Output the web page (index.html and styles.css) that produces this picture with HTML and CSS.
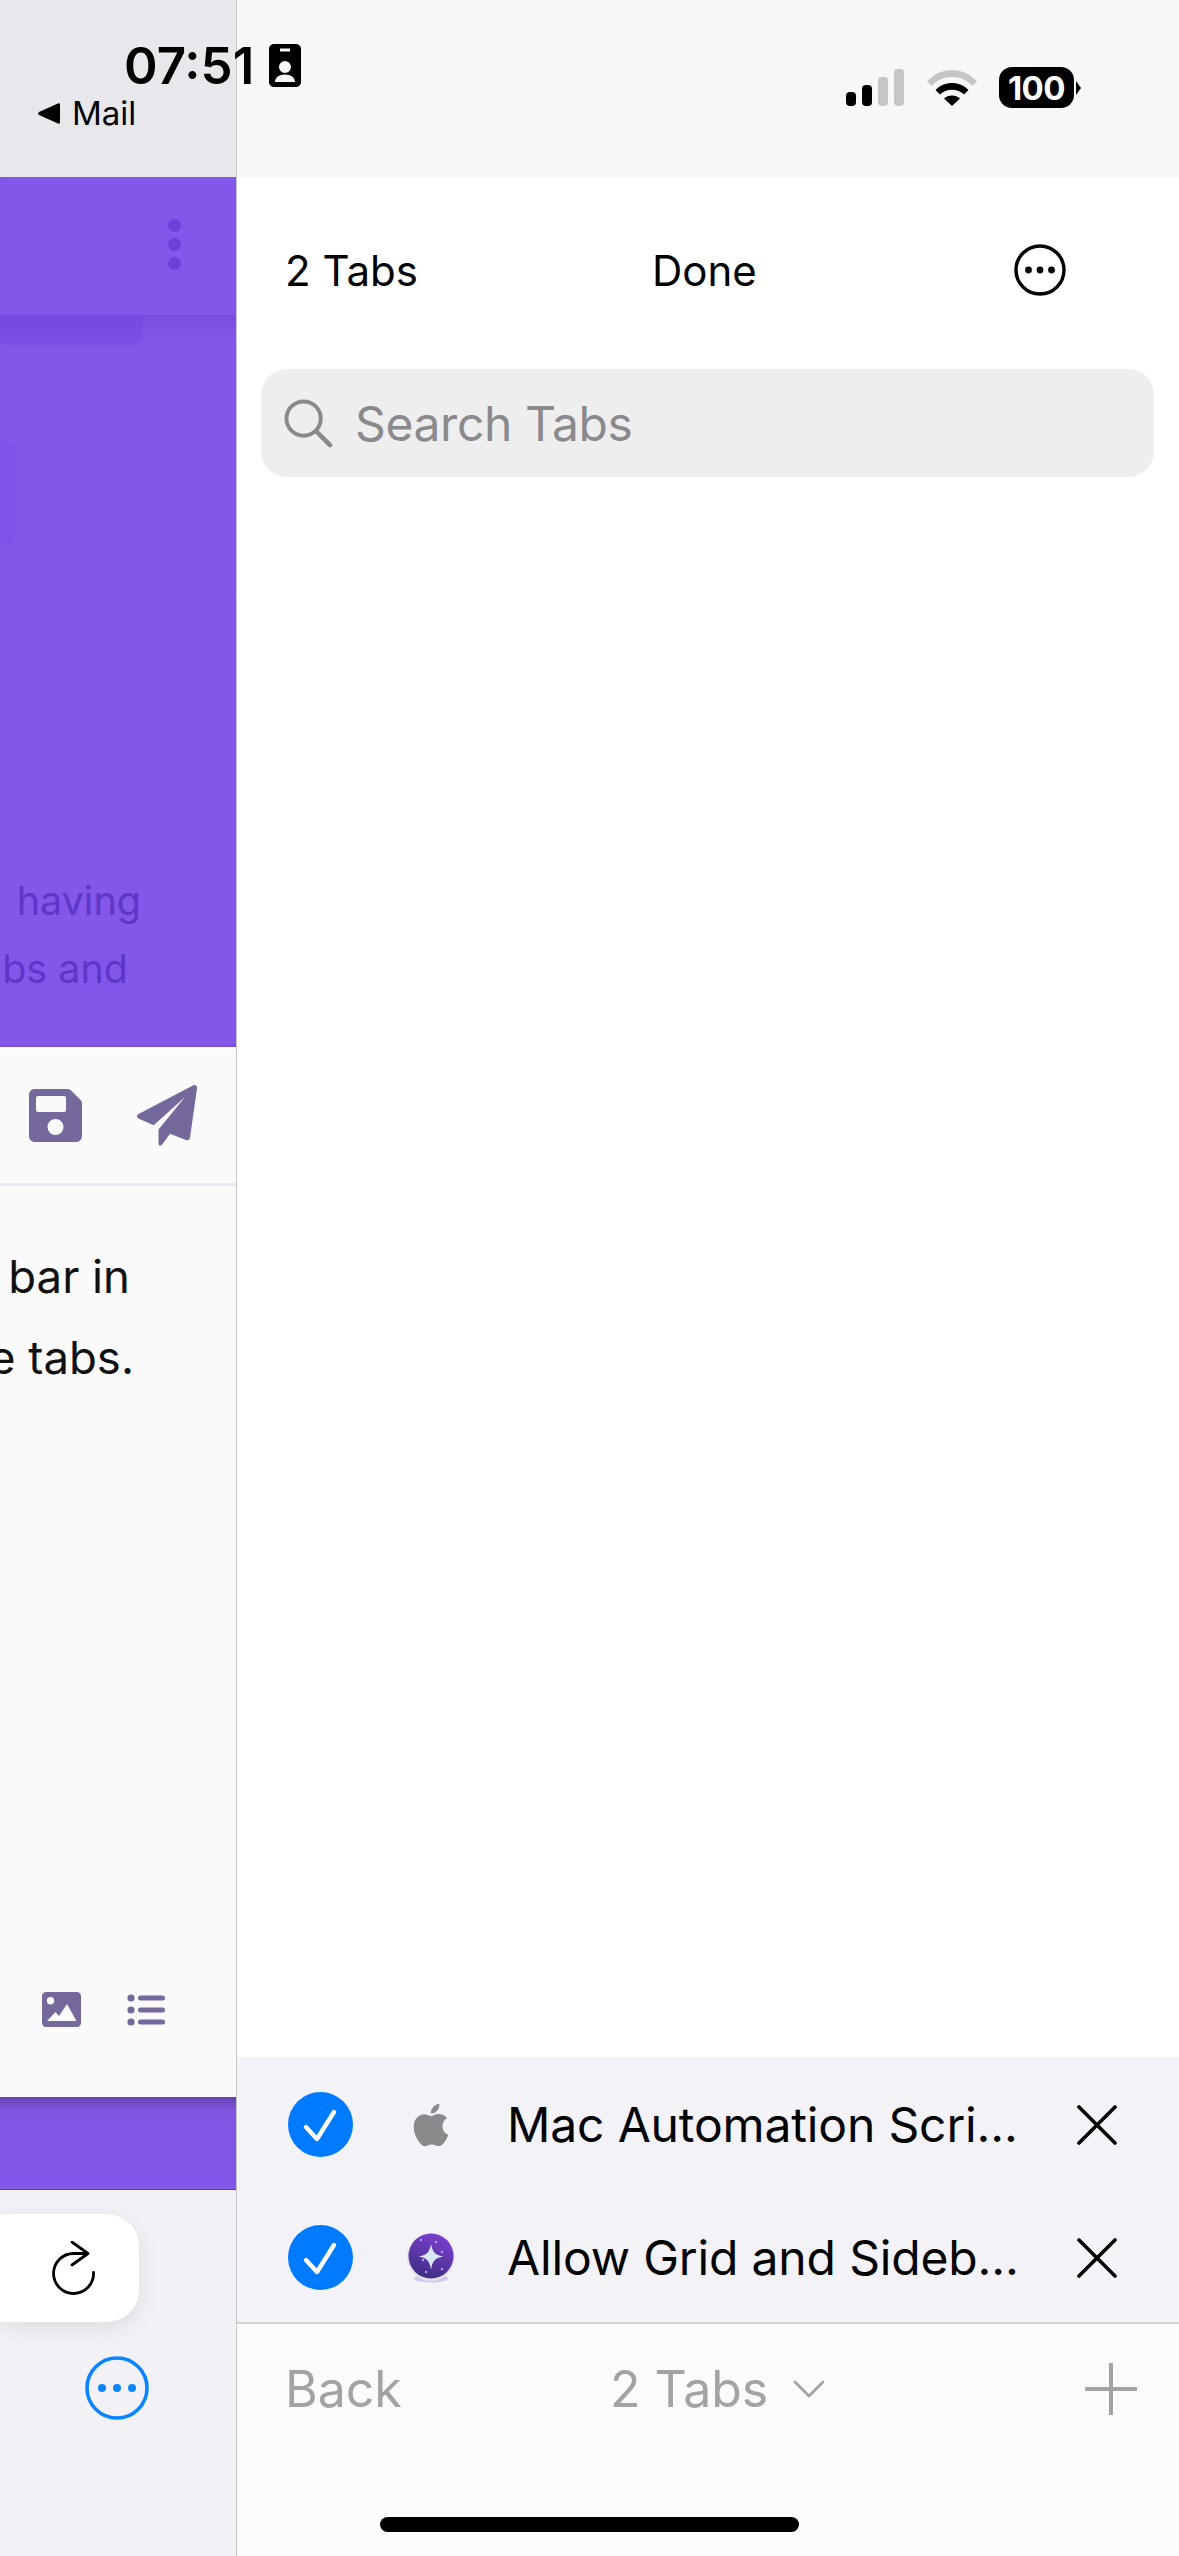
FILE: index.html
```html
<!DOCTYPE html>
<html lang="en">
<head>
  <meta charset="UTF-8" />
  <meta name="viewport" content="width=device-width, initial-scale=1.0">
  <title>Tabs</title>
  <link rel="stylesheet" href="styles.css">
</head>
<body>
<div class="screen">

  <div class="app-pane">
    <div class="app-status"></div>
    <div class="app-purple">
      <div class="app-head">
        <span class="dot"></span>
        <span class="dot"></span>
        <span class="dot"></span>
      </div>
      <div class="head-shadow"></div>
      <div class="ghost-strip"></div>
      <div class="ghost-box"></div>
      <div class="ghost-line"></div>
      <p class="ghost-text line-one">having</p>
      <p class="ghost-text line-two">bs and</p>
    </div>
    <div class="editor">
      <div class="editor-tools">
        <svg class="save-icon" viewBox="0 0 53 53"><path fill="#75689b" fill-rule="evenodd" d="M6 0h32c2 0 3 .6 4.300 1.800l8.800 8.800c1.300 1.300 1.900 2.700 1.900 4.400v32c0 3.400-2.600 6-6 6H6c-3.400 0-6-2.600-6-6V6c0-3.400 2.600-6 6-6zm3 7a2 2 0 0 0-2 2v12a2 2 0 0 0 2 2h26a2 2 0 0 0 2-2V9a2 2 0 0 0-2-2zm17.500 23a8 8 0 1 0 0 16 8 8 0 0 0 0-16z"/></svg>
        <svg class="send-icon" viewBox="0 0 60 61"><path fill="#75689b" d="M56 .5c2.500-1.200 4.300.5 4 3l-7 49c-.3 2.300-2 3.400-4 2.600l-16-6.300-7.800 10.800c-1.300 1.700-3.700 1.200-3.700-1.200V44.500L48 12 16.700 40.300 2 33.700c-2.600-1.200-2.700-3.500 0-5z"/></svg>
      </div>
      <p class="editor-text text-one">bar in</p>
      <p class="editor-text text-two">e tabs.</p>
      <div class="editor-bottom">
        <svg class="image-icon" viewBox="0 0 39 35"><path fill="#75689b" fill-rule="evenodd" d="M4 0h31c2.200 0 4 1.800 4 4v27c0 2.200-1.800 4-4 4H4c-2.200 0-4-1.800-4-4V4c0-2.200 1.800-4 4-4zm4.500 5a3.700 3.700 0 1 0 0 7.400 3.700 3.700 0 0 0 0-7.400zM5 29h29.500l-9.500-17-8 12-3.500-4z"/></svg>
        <svg class="list-icon" viewBox="0 0 38 32"><g fill="#75689b"><circle cx="4" cy="4" r="3.600"/><circle cx="4" cy="16" r="3.600"/><circle cx="4" cy="28" r="3.600"/><rect x="11" y="1.500" width="27" height="5" rx="2.500"/><rect x="11" y="13.500" width="27" height="5" rx="2.500"/><rect x="11" y="25.500" width="27" height="5" rx="2.500"/></g></svg>
      </div>
    </div>
    <div class="purple-bar"></div>
    <div class="browser-bar">
      <div class="reload-card">
        <svg class="reload-icon" viewBox="0 0 46 54"><path fill="none" stroke="#000" stroke-width="2.800" stroke-linecap="round" stroke-linejoin="round" d="M42.500 31.500A20 20 0 1 1 22.500 12.500H36M21 1l16 11.500L21 24"/></svg>
      </div>
      <svg class="more-blue" viewBox="0 0 64 64"><circle cx="32" cy="32" r="30" fill="none" stroke="#0a84ff" stroke-width="3.600"/><g fill="#0a84ff"><circle cx="17" cy="32" r="4"/><circle cx="32" cy="32" r="4"/><circle cx="47" cy="32" r="4"/></g></svg>
    </div>
  </div>

  <div class="tabs-pane">
    <div class="tabs-status"></div>
    <div class="tabs-main">
      <div class="tabs-head">
        <span class="head-count">2 Tabs</span>
        <span class="head-done">Done</span>
        <svg class="head-more" viewBox="0 0 52 52"><circle cx="26" cy="26" r="24" fill="none" stroke="#000" stroke-width="3.400"/><g fill="#000"><circle cx="14.500" cy="26" r="3.400"/><circle cx="26" cy="26" r="3.400"/><circle cx="37.500" cy="26" r="3.400"/></g></svg>
      </div>
      <div class="search">
        <svg class="search-icon" viewBox="0 0 50 50"><circle cx="20" cy="20" r="17.500" fill="none" stroke="#8a8a8e" stroke-width="4"/><path d="M33 33l14 14" stroke="#8a8a8e" stroke-width="4.600" stroke-linecap="round"/></svg>
        <span class="search-text">Search Tabs</span>
      </div>
    </div>
    <div class="open-tabs">
      <div class="tab-row">
        <span class="check"><svg viewBox="0 0 65 65"><path d="M18 35l11 12 17-27" fill="none" stroke="#fff" stroke-width="4.400" stroke-linecap="round" stroke-linejoin="round"/></svg></span>
        <span class="favicon">
          <svg class="apple" viewBox="3.500 2 17 20"><path fill="#8a8a8c" d="M18.710 19.500c-.83 1.240-1.710 2.450-3.050 2.470-1.340.03-1.770-.79-3.290-.79-1.530 0-2 .77-3.270.82-1.310.05-2.300-1.320-3.140-2.530C4.250 17 2.940 12.450 4.700 9.390c.87-1.520 2.430-2.480 4.120-2.510 1.280-.02 2.500.87 3.290.87.78 0 2.260-1.070 3.810-.91.65.03 2.470.26 3.640 1.980-.09.06-2.170 1.280-2.150 3.810.03 3.020 2.650 4.030 2.680 4.040-.03.07-.42 1.440-1.380 2.830M13 3.500c.73-.83 1.940-1.460 2.940-1.500.13 1.170-.34 2.350-1.040 3.190-.69.85-1.830 1.510-2.950 1.420-.15-1.150.41-2.350 1.050-3.110z"/></svg>
        </span>
        <span class="tab-title">Mac Automation Scri...</span>
        <svg class="close" viewBox="0 0 40 40"><path d="M2 2l36 36M38 2L2 38" stroke="#000" stroke-width="3.600" stroke-linecap="round"/></svg>
      </div>
      <div class="tab-row">
        <span class="check"><svg viewBox="0 0 65 65"><path d="M18 35l11 12 17-27" fill="none" stroke="#fff" stroke-width="4.400" stroke-linecap="round" stroke-linejoin="round"/></svg></span>
        <span class="favicon">
          <svg class="orb" viewBox="0 0 48 50">
            <defs>
              <linearGradient id="orbFill" x1="0.700" y1="0" x2="0.300" y2="1">
                <stop offset="0" stop-color="#7d3fd0"/>
                <stop offset="1" stop-color="#3d2d83"/>
              </linearGradient>
            </defs>
            <ellipse cx="24" cy="45.500" rx="17" ry="4" fill="#cfc8ee"/>
            <circle cx="24" cy="24" r="24" fill="#e4e2e8"/>
            <circle cx="24" cy="23" r="22.500" fill="url(#orbFill)"/>
            <path fill="#d9e6f4" d="M24 11c1.500 8 4 11 12 12.500-8 1.500-10.500 4.500-12 13-1.500-8.500-4-11.500-12-13 8-1.500 10.500-4.500 12-12.500z"/>
            <g fill="#a9a4ea"><circle cx="14" cy="7" r="1.200"/><circle cx="29" cy="9" r="1.200"/><circle cx="35" cy="19" r="1.200"/><circle cx="16" cy="27" r="1.200"/><circle cx="19" cy="39" r="1.200"/><circle cx="35" cy="36" r="1.200"/></g>
          </svg>
        </span>
        <span class="tab-title">Allow Grid and Sideb...</span>
        <svg class="close" viewBox="0 0 40 40"><path d="M2 2l36 36M38 2L2 38" stroke="#000" stroke-width="3.600" stroke-linecap="round"/></svg>
      </div>
    </div>
    <div class="tab-bar">
      <div class="tab-bar-row">
        <span class="bar-back">Back</span>
        <span class="bar-count">2 Tabs</span>
        <svg class="bar-chevron" viewBox="0 0 32 18"><path d="M2 2l14 14L30 2" fill="none" stroke="#a3a3a5" stroke-width="2.800" stroke-linecap="round" stroke-linejoin="round"/></svg>
        <svg class="bar-plus" viewBox="0 0 52 52"><path d="M26 1v50M1 26h50" stroke="#a3a3a5" stroke-width="4" stroke-linecap="round"/></svg>
      </div>
      <div class="home-bar"></div>
    </div>
  </div>

  <div class="statusbar">
    <div class="status-left">
      <div class="status-time">
        <span class="time">07:51</span>
        <svg class="badge" viewBox="0 0 32 43"><path fill-rule="evenodd" d="M5 0h22c2.800 0 5 2.200 5 5v33c0 2.800-2.200 5-5 5H5c-2.800 0-5-2.200-5-5V5c0-2.800 2.200-5 5-5zm6 4.500v3h10v-3zM16 17a6 6 0 1 0 0 12 6 6 0 0 0 0-12zM6 38h20c0-4.500-4-7.500-10-7.500S6 33.500 6 38z"/></svg>
      </div>
      <div class="status-back">
        <svg class="back-arrow" viewBox="0 0 22 21"><path d="M20 0.500c1.200-.5 2 .2 2 1.500v17c0 1.300-.8 2-2 1.500L1 12c-1.300-.7-1.300-2.300 0-3z"/></svg>
        <span class="back-label">Mail</span>
      </div>
    </div>
    <div class="status-right">
      <span class="signal">
        <i class="bar bar-1"></i><i class="bar bar-2"></i><i class="bar bar-3"></i><i class="bar bar-4"></i>
      </span>
      <svg class="wifi" viewBox="0 0 50 37">
        <path d="M0 12.500C13-3 37-3 50 12.500l-4.500 4.500c-10.500-12-30.500-12-41 0z" fill="#c6c6c6"/>
        <path d="M8.500 21C17 11.500 33 11.500 41.500 21L37 25.500c-6-6.500-18-6.500-24 0z"/>
        <path d="M17 29.500c4-4 12-4 16 0l-8 7.500z"/>
      </svg>
      <span class="battery"><span class="battery-level">100</span></span>
      <span class="battery-tip"></span>
    </div>
  </div>

</div>
</body>
</html>
```

FILE: styles.css
```css
* {
  box-sizing: border-box;
}
body {
  margin: 0;
  font-family: Inter, "Liberation Sans", sans-serif;
  background: white;
}
p {
  margin: 0;
}

.screen {
  position: relative;
  width: 1179px;
  height: 2556px;
  display: flex;
  overflow: hidden;
}

/* left pane, the app behind the sidebar */
.app-pane {
  width: 237px;
  flex-shrink: 0;
  display: flex;
  flex-direction: column;
  border-right: 1px solid #c6c6ca;
  overflow: hidden;
}
.app-status {
  height: 177px;
  background: #e8e7ec;
}
.app-purple {
  position: relative;
  height: 870px;
  background: #8257e9;
  box-shadow: inset 0 -3px 3px -2px #6f47c9;
}
.app-head {
  height: 138px;
  padding: 42px 0 0 168px;
  display: flex;
  flex-direction: column;
  gap: 6px;
}
.dot {
  width: 13px;
  height: 13px;
  border-radius: 50%;
  background: #6d3fdb;
}
.head-shadow {
  position: absolute;
  left: 0;
  top: 138px;
  width: 236px;
  height: 26px;
  background: linear-gradient(#7a4fe0, #8257e9);
}
.ghost-strip {
  position: absolute;
  left: 0;
  top: 138px;
  width: 143px;
  height: 30px;
  background: linear-gradient(#7549dd, #7c50e4);
  border-bottom-right-radius: 12px;
}
.ghost-box {
  position: absolute;
  left: 0;
  top: 264px;
  width: 15px;
  height: 105px;
  background: #7f53e9;
  border-radius: 0 10px 10px 0;
}
.ghost-line {
  position: absolute;
  left: 0;
  top: 420px;
  width: 236px;
  height: 1px;
  background: #7f54e6;
}
.ghost-text {
  position: absolute;
  display: flex;
  justify-content: flex-end;
  left: 0;
  height: 50px;
  white-space: nowrap;
  font-size: 39.500px;
  line-height: 50px;
  color: #5e36c8;
}
.line-one {
  top: 699px;
  width: 141px;
}
.line-two {
  top: 767px;
  width: 128px;
}

.editor {
  height: 1050px;
  background: #fafafa;
  display: flex;
  flex-direction: column;
}
.editor-tools {
  height: 139px;
  padding-right: 39px;
  display: flex;
  align-items: center;
  justify-content: flex-end;
  gap: 55px;
  border-bottom: 3px solid #ece6f8;
}
.save-icon {
  width: 53px;
  height: 53px;
}
.send-icon {
  width: 60px;
  height: 61px;
}
.editor-text {
  height: 81px;
  display: flex;
  justify-content: flex-end;
  white-space: nowrap;
  font-size: 45.500px;
  line-height: 81px;
  color: #111;
}
.text-one {
  margin-top: 50px;
  margin-right: 106px;
}
.text-two {
  margin-right: 102px;
}
.editor-bottom {
  margin-top: auto;
  margin-bottom: 70px;
  padding-right: 71px;
  display: flex;
  align-items: center;
  justify-content: flex-end;
  gap: 46px;
}
.image-icon {
  width: 39px;
  height: 35px;
}
.list-icon {
  width: 38px;
  height: 32px;
}

.purple-bar {
  height: 93px;
  background: linear-gradient(#6643b4, #7f55e2 14px, #8257e9);
  border-bottom: 1px solid #5f3fb0;
}
.browser-bar {
  flex-grow: 1;
  background: #f1f1f6;
  display: flex;
  flex-direction: column;
  padding-top: 24px;
}
.reload-card {
  width: 139px;
  height: 108px;
  background: white;
  border-radius: 0 32px 32px 0;
  box-shadow: 0 6px 22px rgba(0,0,0,0.09);
  display: flex;
  align-items: center;
  padding-left: 51px;
}
.reload-icon {
  width: 46px;
  height: 54px;
}
.more-blue {
  width: 64px;
  height: 64px;
  margin: 34px 0 0 85px;
}

/* right pane, the tab list */
.tabs-pane {
  flex-grow: 1;
  display: flex;
  flex-direction: column;
}
.tabs-status {
  height: 177px;
  background: #f7f7f7;
}
.tabs-main {
  height: 1880px;
  background: white;
  padding: 0 25px 0 24px;
}
.tabs-head {
  height: 192px;
  padding: 0 0 6px 24px;
  display: flex;
  align-items: center;
  font-size: 42px;
  color: #000;
}
.head-count {
  width: 367px;
}
.head-done {
  width: 362px;
}
.head-more {
  width: 52px;
  height: 52px;
}
.search {
  height: 108px;
  background: #eeeeef;
  border-radius: 26px;
  display: flex;
  align-items: center;
  gap: 22px;
  padding-left: 23px;
}
.search-icon {
  width: 49px;
  height: 49px;
}
.search-text {
  font-size: 48px;
  letter-spacing: -0.4px;
  color: #8a8a8e;
}

.open-tabs {
  height: 265px;
  background: #f2f2f7;
  padding-top: 35px;
}
.tab-row {
  height: 65px;
  margin-bottom: 68px;
  display: flex;
  align-items: center;
  padding-left: 51px;
}
.check {
  width: 65px;
  height: 65px;
  border-radius: 50%;
  background: #007aff;
  flex-shrink: 0;
}
.check svg {
  display: block;
  width: 65px;
  height: 65px;
}
.favicon {
  width: 48px;
  margin-left: 54px;
  display: flex;
  justify-content: center;
}
.apple {
  width: 36px;
  height: 44px;
}
.orb {
  width: 48px;
  height: 50px;
}
.tab-title {
  width: 509px;
  margin-left: 52px;
  white-space: nowrap;
  font-size: 48px;
  letter-spacing: -0.15px;
  color: #000;
}
.close {
  width: 40px;
  height: 40px;
  margin-left: 61px;
}

.tab-bar {
  flex-grow: 1;
  background: #fbfbfc;
  border-top: 2px solid #d4d4d8;
  display: flex;
  flex-direction: column;
}
.tab-bar-row {
  height: 130px;
  display: flex;
  align-items: center;
  padding-left: 48px;
  font-size: 50px;
  color: #a3a3a5;
}
.bar-back {
  width: 325px;
}
.bar-count {
  width: 183px;
}
.bar-chevron {
  width: 32px;
  height: 18px;
}
.bar-plus {
  width: 52px;
  height: 52px;
  margin-left: 260px;
}
.home-bar {
  width: 419px;
  height: 15px;
  margin: 63px 0 0 143px;
  background: black;
  border-radius: 8px;
}

/* status bar lies across both panes */
.statusbar {
  position: absolute;
  top: 0;
  left: 0;
  right: 0;
  display: flex;
  justify-content: space-between;
  color: black;
}
.status-left {
  padding: 44px 0 0 38px;
}
.status-time {
  display: flex;
  align-items: center;
  gap: 15px;
  padding-left: 86px;
  height: 43px;
}
.time {
  font-size: 51px;
  font-weight: 600;
  line-height: 43px;
}
.badge {
  width: 32px;
  height: 43px;
}
.status-back {
  display: flex;
  align-items: center;
  gap: 12px;
  margin-top: 8px;
  height: 36px;
}
.back-arrow {
  width: 22px;
  height: 21px;
}
.back-label {
  font-size: 33px;
  font-weight: 400;
}
.status-right {
  display: flex;
  align-items: center;
  height: 41px;
  margin: 67px 98px 0 0;
}
.signal {
  display: flex;
  align-items: flex-end;
  gap: 6px;
  height: 37px;
}
.bar {
  display: block;
  width: 10px;
  border-radius: 4px;
  background: black;
}
.bar-1 {
  height: 14px;
}
.bar-2 {
  height: 21px;
}
.bar-3 {
  height: 29px;
  background: #c6c6c6;
}
.bar-4 {
  height: 37px;
  background: #c6c6c6;
}
.wifi {
  width: 50px;
  height: 37px;
  margin-left: 23px;
}
.battery {
  width: 75px;
  height: 41px;
  margin-left: 22px;
  background: black;
  border-radius: 13px;
  display: flex;
  align-items: center;
  justify-content: center;
}
.battery-level {
  font-size: 33px;
  font-weight: 700;
  color: white;
  letter-spacing: -0.5px;
}
.battery-tip {
  width: 0;
  height: 0;
  margin-left: 2px;
  border-top: 7px solid transparent;
  border-bottom: 7px solid transparent;
  border-left: 5px solid black;
}
```
